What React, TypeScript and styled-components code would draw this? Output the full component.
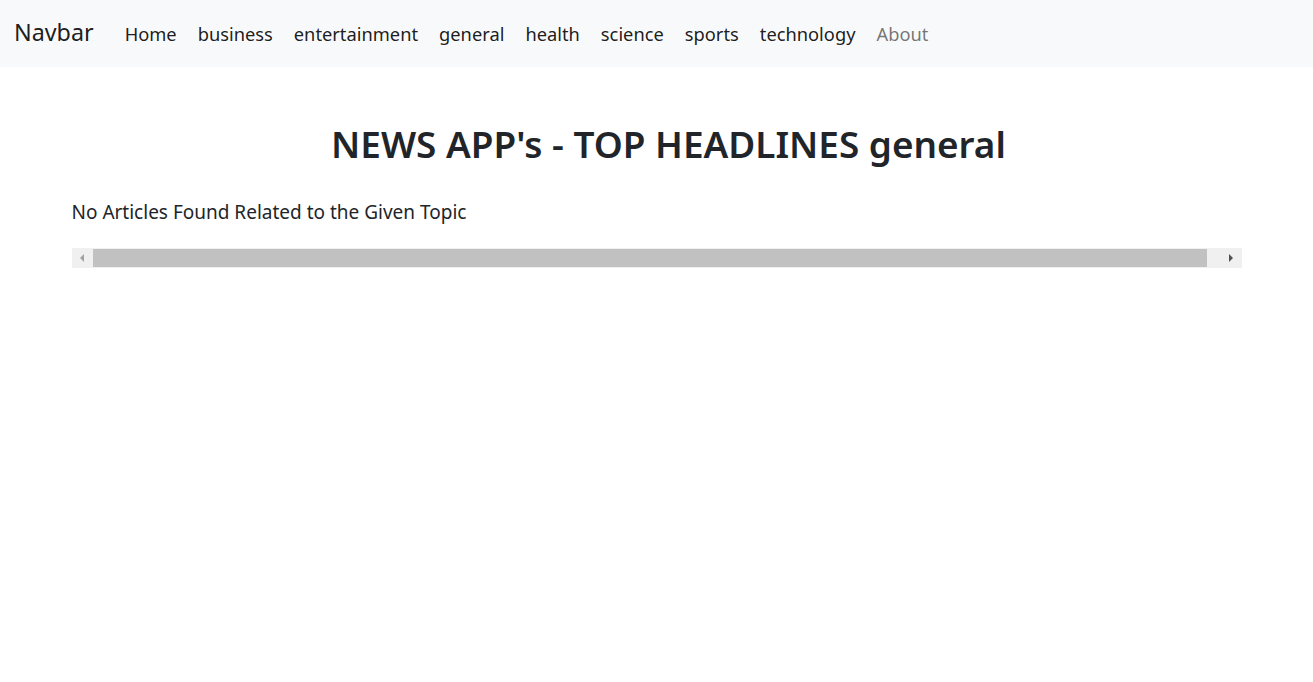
import React from "react";
import styled, { createGlobalStyle } from "styled-components";

const Global = createGlobalStyle`
  html, body { margin: 0; padding: 0; background: #fff; }
  body {
    font-family: "Noto Sans", "Open Sans", "Liberation Sans", sans-serif;
    color: #212529;
  }
  * { box-sizing: border-box; }
`;

const NavBar = styled.nav`
  display: flex;
  align-items: center;
  height: 67px;
  padding: 0 0 0 14px;
  background: #f8f9fa;
`;

const Brand = styled.a`
  font-size: 23.3px;
  color: rgba(0, 0, 0, 0.9);
  text-decoration: none;
  margin-right: 31px;
  line-height: 30px;
  padding-bottom: 3px;
`;

const NavList = styled.div`
  display: flex;
  align-items: center;
  gap: 21px;
`;

const NavLink = styled.a<{ $muted?: boolean }>`
  font-size: 18.3px;
  line-height: 24px;
  text-decoration: none;
  color: ${(p) => (p.$muted ? "rgba(0,0,0,0.55)" : "rgba(0,0,0,0.9)")};
`;

const Container = styled.main`
  width: 1170px;
  margin: 0 auto;
  padding-top: 55px;
`;

const Title = styled.h1`
  margin: 0 0 32px;
  padding-left: 24px;
  text-align: center;
  font-size: 36.9px;
  font-weight: 600;
  line-height: 44.4px;
`;

const Empty = styled.p`
  margin: 0 0 21px;
  font-size: 19px;
  line-height: 28.5px;
`;

const Track = styled.div`
  display: flex;
  align-items: stretch;
  height: 20px;
  background: #f0f0f0;
  padding: 1px 0;
`;

const ArrowBtn = styled.div<{ $w: number; $dir: "left" | "right" }>`
  width: ${(p) => p.$w}px;
  display: flex;
  align-items: center;
  justify-content: center;
  &::before {
    content: "";
    width: 0;
    height: 0;
    border-top: 4px solid transparent;
    border-bottom: 4px solid transparent;
    ${(p) =>
      p.$dir === "left"
        ? "border-right: 4px solid #a3a3a3;"
        : "border-left: 4px solid #505050;"}
  }
`;

const Thumb = styled.div`
  flex: 1;
  background: #c1c1c1;
`;

const Spare = styled.div`
  width: 14px;
`;

const links = [
  "Home",
  "business",
  "entertainment",
  "general",
  "health",
  "science",
  "sports",
  "technology",
];

export default function App() {
  return (
    <>
      <Global />
      <NavBar>
        <Brand href="#">Navbar</Brand>
        <NavList>
          {links.map((l) => (
            <NavLink key={l} href="#">
              {l}
            </NavLink>
          ))}
          <NavLink $muted href="#">
            About
          </NavLink>
        </NavList>
      </NavBar>
      <Container>
        <Title>NEWS APP's - TOP HEADLINES general</Title>
        <Empty>No Articles Found Related to the Given Topic</Empty>
        <Track>
          <ArrowBtn $w={21} $dir="left" />
          <Thumb />
          <Spare />
          <ArrowBtn $w={21} $dir="right" />
        </Track>
      </Container>
    </>
  );
}
